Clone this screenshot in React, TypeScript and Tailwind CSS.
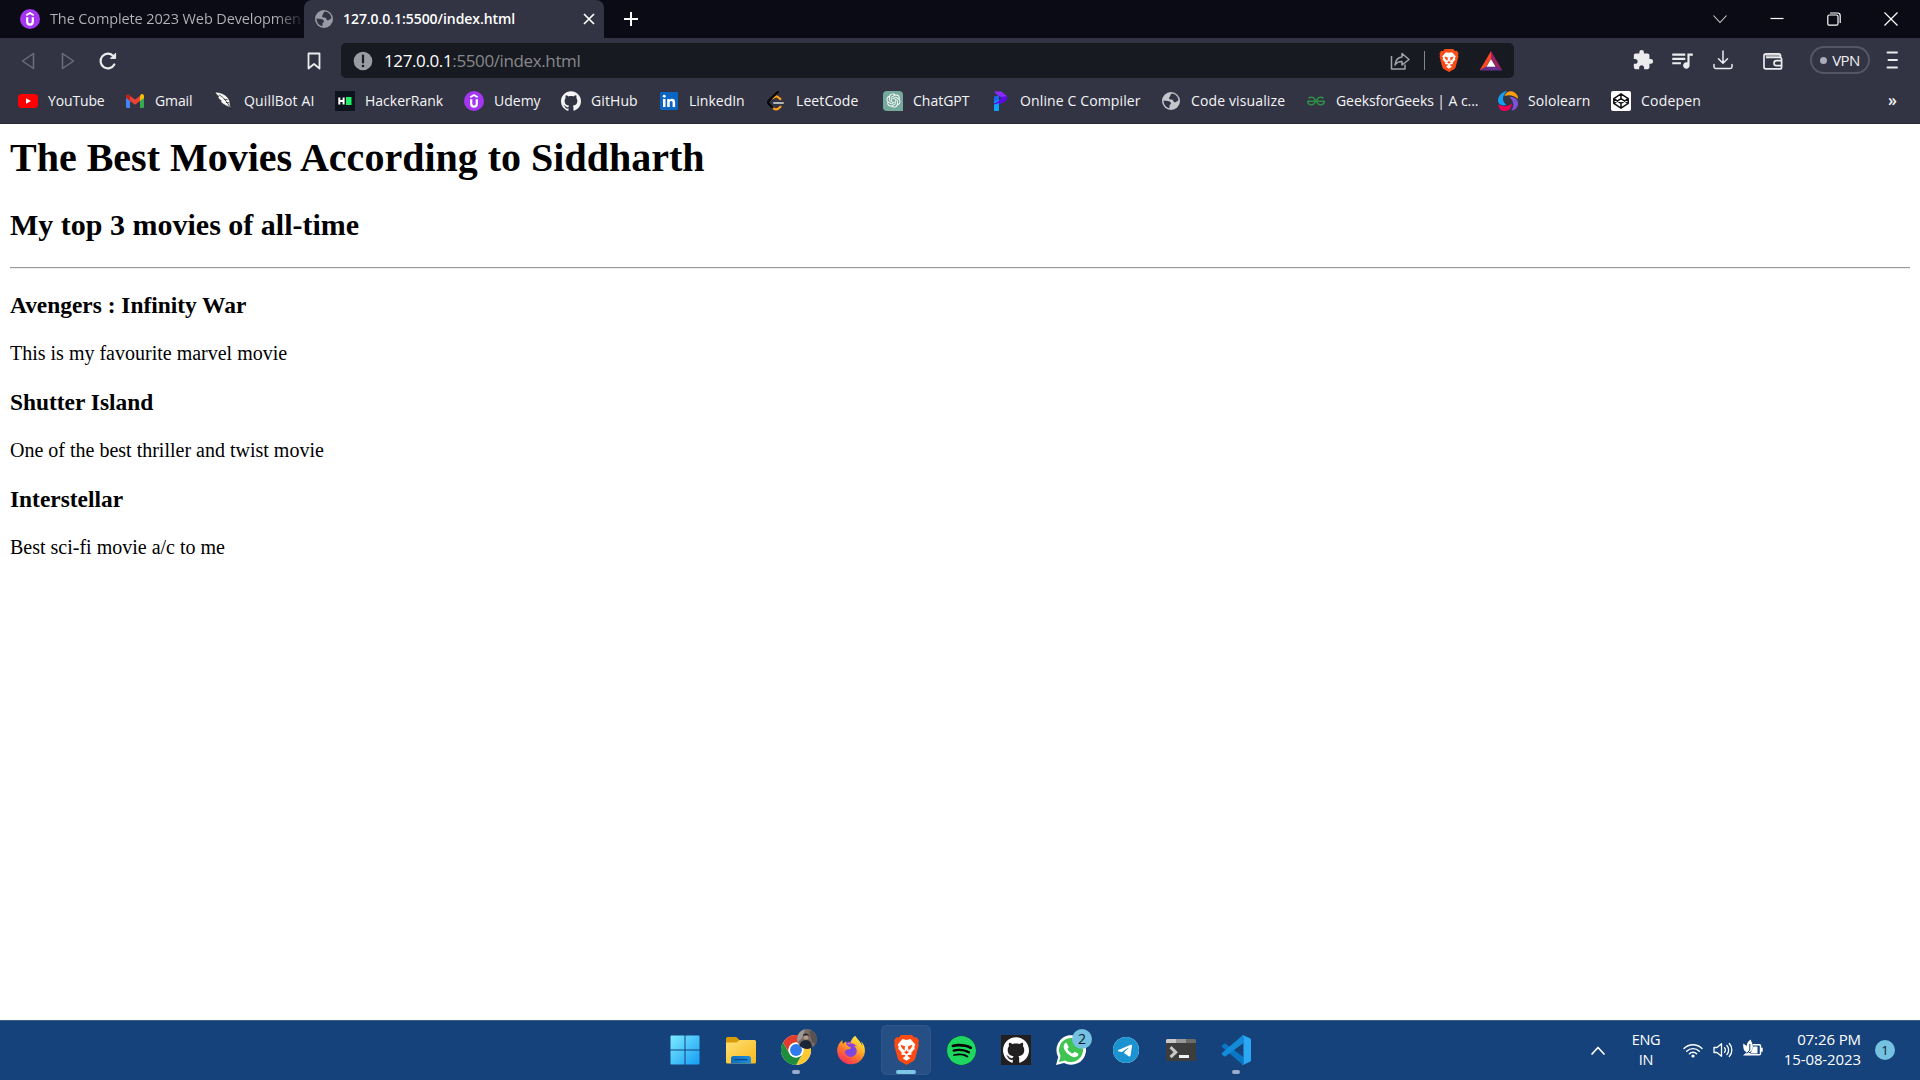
import React from 'react';
import { SiSpotify, SiGithub, SiTelegram, SiFirefoxbrowser, SiGeeksforgeeks } from 'react-icons/si';
import { RiOpenaiFill } from 'react-icons/ri';
import { MdExtension, MdQueueMusic } from 'react-icons/md';

const Udemy = () => (
  <svg viewBox="0 0 20 20" className="size-5 shrink-0">
    <circle cx="10" cy="10" r="10" fill="#a435f0" />
    <path d="M6.3 6.2 10 4l3.7 2.2" fill="none" stroke="#fff" strokeWidth="1.9" />
    <path d="M7.2 8.2v4.6a2.8 2.8 0 0 0 5.6 0V8.2" fill="none" stroke="#fff" strokeWidth="2.2" />
  </svg>
);

const Globe = ({ bg, fg }: { bg: string; fg: string }) => (
  <svg viewBox="0 0 20 20" className="size-5 shrink-0">
    <circle cx="10" cy="10" r="9" fill={fg} />
    <path d="M10.5 2.6C9 4 9.600 5 8.600 6 7.500 7 8 8.400 9.600 8.400c1.700 0 2.900.4 2.900 1.900 0 1 1.400 1.200 2.300.6L17.400 9.500C17.300 5.600 14.200 2.700 10.500 2.600Z" fill={bg} />
    <path d="M2.600 9.500 6.800 10c1.600.3 3.200 1 3.200 2.300s-1.400 1-1.500 2.400L8.400 17.200C4.900 16.500 2.500 13.500 2.600 9.500Z" fill={bg} />
  </svg>
);

const YouTube = () => (
  <svg viewBox="0 0 20 20" className="size-5 shrink-0">
    <rect y="3" width="20" height="14" rx="3.500" fill="#f00" />
    <path d="m8 7.200 5 2.800-5 2.800Z" fill="#fff" />
  </svg>
);

const Gmail = () => (
  <svg viewBox="0 0 20 20" className="size-5 shrink-0">
    <path d="M1 5.500 5 8.500V17H2.300A1.300 1.300 0 0 1 1 15.700Z" fill="#4285f4" />
    <path d="M19 5.500 15 8.500V17h2.700a1.300 1.300 0 0 0 1.300-1.300Z" fill="#34a853" />
    <path d="M15 5v5l4-3V5.200c0-1.900-2-2.700-3.200-1.700Z" fill="#fbbc04" />
    <path d="M5 10V4.900L10 8.600l5-3.700V10l-5 3.700Z" fill="#ea4335" />
    <path d="M1 5.200V7l4 3V4.900l-.9-1.400C2.900 2.600 1 3.400 1 5.200Z" fill="#c5221f" />
  </svg>
);

const Quill = () => (
  <svg viewBox="0 0 20 20" className="size-5 shrink-0">
    <path d="M1 1C7 1.200 13 4 15.200 9c.9 2 .7 4.500 1.200 6.500l.8 2.500-2.500-2.200C10 14 8.300 12.500 6.500 10.500L7.500 10C5 8.500 4.300 7 3.600 5.300l1.400.2C3 4 2 3 1 1Z" fill="#f6f6f4" stroke="#16161a" strokeWidth=".5" />
    <path d="M5 3.800c4.500 2.400 8 6.500 12 14.500M10 8.300l3.500.3M12 11.500l3 .3" fill="none" stroke="#1a1a1e" strokeWidth=".7" />
  </svg>
);

const HackerRank = () => (
  <svg viewBox="0 0 20 20" className="size-5 shrink-0">
    <rect width="20" height="20" fill="#0e141e" />
    <path d="M4.300 6.500v7M8.600 6.500v7M4 10h5" stroke="#fff" strokeWidth="2" />
    <rect x="11" y="6" width="5.500" height="8" fill="#1ff06a" />
  </svg>
);

const LinkedIn = () => (
  <svg viewBox="0 0 20 20" className="size-5 shrink-0">
    <rect x="1" y="1" width="18" height="18" rx="1.200" fill="#0a66c2" />
    <path d="M4 8h2.500v8H4ZM8.200 8h2.400v1.100c.5-.8 1.400-1.300 2.500-1.300 2.400 0 3 1.600 3 3.700V16h-2.500v-4c0-1.200-.2-2-1.300-2s-1.600.8-1.600 2v4H8.200Z" fill="#fff" />
    <circle cx="5.250" cy="5.300" r="1.450" fill="#fff" />
  </svg>
);

const LeetCode = () => (
  <svg viewBox="0 0 20 20" className="size-5 shrink-0">
    <path d="M6.800 7.200 8.300 6.200c1.500-1.300 3-.9 4.200.3l1.900 1.600M6.600 16.500c2.200 2.500 4.700 2.500 6.500.5l1.400-1.300" fill="none" stroke="#ffa116" strokeWidth="2.200" strokeLinecap="round" />
    <path d="m11.800 1-9 8.600a2.500 2.500 0 0 0 0 3.300L6.500 16.500" fill="none" stroke="#070706" strokeWidth="2.200" strokeLinecap="round" />
    <path d="M8 12H17" stroke="#b3b3b3" strokeWidth="2" strokeLinecap="round" />
  </svg>
);

const ChatGPT = () => (
  <span className="flex size-5 shrink-0 items-center justify-center rounded-[4px] rounded-br-none bg-[#75a99c] text-white">
    <RiOpenaiFill className="size-[17px]" />
  </span>
);

const Programiz = () => (
  <svg viewBox="0 0 20 20" className="size-5 shrink-0">
    <path d="M4 9.800 9 7.500V18.500a1.500 1.500 0 0 1-1.500 1.500H4Z" fill="#0ea2ff" />
    <path d="M4 .5h7.500L17 5.200v3.500L12 6.400C9.500 5 7 4.500 4 .5Z" fill="#8a2bff" />
    <path d="m11.500 5.800 5.500-.6v3.500c-3.500 3.600-8 4.800-13 7.300v-3.800c2-.2 6.500-2.500 7.500-6.400Z" fill="#5b0be6" />
    <path d="M4 5.500 9 4.500v4l-5 2.500Z" fill="#1668f2" />
    <path d="M4 13.500 9 12v6.500a1.500 1.500 0 0 1-1.500 1.500H4Z" fill="#0ea2ff" />
  </svg>
);

const Sololearn = () => (
  <svg viewBox="0 0 20 20" className="size-5 shrink-0">
    <path d="M9.500 0C3 .5-1 6.500.3 11.300c1 2.500 4.500 4 8 2.500C3.500 10.500 4 4 9.500 0Z" fill="#149ef2" />
    <path d="M6.300 5C8.500 0 13.500-1 17.200 1.900c2.300 1.900 3 3.700 2.600 6.100C16.500 4 10.500 3.500 6.300 5Z" fill="#ff9f0a" />
    <path d="M11.500 6c5-.8 9 2.900 8.500 7.200-.6 3.800-3.200 6-6.700 6.300 3-3.800 3-9-1.800-13.500Z" fill="#7f50d8" />
    <path d="M.3 13.300c3.500 2.600 8.500 3 13.500-.8 0 4.800-3.800 8-8.200 7.400C2.300 19.500.5 17 .3 13.300Z" fill="#f50057" />
  </svg>
);

const Codepen = () => (
  <svg viewBox="0 0 20 20" className="size-5 shrink-0">
    <rect width="20" height="20" rx="2" fill="#fff" />
    <path d="M10 2.800 17.200 7.600v4.800L10 17.200 2.800 12.400V7.600ZM10 2.800v4.800M10 12.400v4.800M2.800 7.600l7.200 4.800 7.200-4.800M2.800 12.400 10 7.600l7.200 4.800" fill="none" stroke="#111" strokeWidth="1.500" strokeLinejoin="round" />
  </svg>
);

const bookmarks: { label: string; icon: React.ReactNode; box: string }[] = [
  { label: 'YouTube', icon: <YouTube />, box: 'w-[107px] tracking-[-0.15px]' },
  { label: 'Gmail', icon: <Gmail />, box: 'w-[89px] tracking-[-0.1px]' },
  { label: 'QuillBot AI', icon: <Quill />, box: 'w-[121px] tracking-[0.15px]' },
  { label: 'HackerRank', icon: <HackerRank />, box: 'w-[129px]' },
  { label: 'Udemy', icon: <Udemy />, box: 'w-[97px]' },
  { label: 'GitHub', icon: <SiGithub className="size-5 shrink-0" />, box: 'w-[98px] tracking-[0.1px]' },
  { label: 'LinkedIn', icon: <LinkedIn />, box: 'w-[107px]' },
  { label: 'LeetCode', icon: <LeetCode />, box: 'w-[117px] tracking-[0.1px]' },
  { label: 'ChatGPT', icon: <ChatGPT />, box: 'w-[107px]' },
  { label: 'Online C Compiler', icon: <Programiz />, box: 'w-[171px] tracking-[0.13px]' },
  { label: 'Code visualize', icon: <Globe bg="#323443" fg="#c4c6cc" />, box: 'w-[145px] tracking-[0.13px]' },
  { label: 'GeeksforGeeks | A c...', icon: <SiGeeksforgeeks className="size-5 shrink-0 px-px text-[#2f8d46]" />, box: 'w-[192px] tracking-[-0.07px]' },
  { label: 'Sololearn', icon: <Sololearn />, box: 'w-[113px] tracking-[0.1px]' },
  { label: 'Codepen', icon: <Codepen />, box: 'w-[100px] tracking-[0.2px]' },
];

function TabStrip() {
  return (
    <div className="flex h-[38px] items-center bg-[#0a0b15]">
      <div className="flex w-[304px] items-center gap-2.5 pl-5">
        <Udemy />
        <div className="w-[250px] whitespace-nowrap bg-gradient-to-r from-[#b4b5bb] from-90% to-[#2a2b34] bg-clip-text text-[14.5px] tracking-[-0.12px] text-transparent">
          The Complete 2023 Web Developmen
        </div>
      </div>
      <div className="flex h-full w-[300px] items-center rounded-t-lg bg-[#323443] pl-2.5">
        <Globe bg="#323443" fg="#9a9ca5" />
        <span className="mb-px ml-[9px] w-[240px] whitespace-nowrap text-[14px] font-semibold tracking-[-0.06px] text-white">127.0.0.1:5500/index.html</span>
        <svg viewBox="0 0 12 12" className="size-3" fill="none" stroke="#fff" strokeWidth="1.700"><path d="m1 1 10 10M11 1 1 11" /></svg>
      </div>
      <svg viewBox="0 0 16 16" className="ml-[19px] size-4" fill="none" stroke="#fff" strokeWidth="2"><path d="M8 1v14M1 8h14" /></svg>
      <div className="ml-auto flex items-center gap-[43px] pr-[22px]">
        <svg viewBox="0 0 14 14" className="size-3.5" fill="none" stroke="#d0d1d6" strokeWidth="1.100"><path d="m.5 3.500 6.500 7 6.500-7" /></svg>
        <svg viewBox="0 0 14 14" className="size-3.5" fill="none" stroke="#fff" strokeWidth="1.200"><path d="M.5 6.500h13" /></svg>
        <svg viewBox="0 0 14 14" className="size-3.5" fill="none" stroke="#fff" strokeWidth="1.200"><rect x=".8" y="3" width="10.200" height="10.200" rx="1.500" /><path d="M3 1h7.500a2.700 2.700 0 0 1 2.700 2.700V11" /></svg>
        <svg viewBox="0 0 14 14" className="size-3.5" fill="none" stroke="#fff" strokeWidth="1.200"><path d="m.5.5 13 13M13.500.5l-13 13" /></svg>
      </div>
    </div>
  );
}

function Toolbar() {
  return (
    <div className="flex h-[45px] items-center text-[#ececee]">
      <svg viewBox="0 0 14 18" className="ml-[21px] h-[18px] w-3.5" fill="none" stroke="#6c6e7c" strokeWidth="1.500" strokeLinejoin="round"><path d="M12.500 1.500v15L1.500 9Z" /></svg>
      <svg viewBox="0 0 14 18" className="ml-[26px] h-[18px] w-3.5" fill="none" stroke="#6c6e7c" strokeWidth="1.500" strokeLinejoin="round"><path d="M1.500 1.500v15L12.500 9Z" /></svg>
      <svg viewBox="0 0 20 20" className="ml-[23px] size-5" fill="none" stroke="currentColor" strokeWidth="2.200" strokeLinecap="round"><path d="M16.300 13.500A7.300 7.300 0 1 1 15 4.800" /><path d="M12.800 7.400h4.800V2.600Z" fill="currentColor" strokeWidth="1" strokeLinejoin="round" /></svg>
      <svg viewBox="0 0 14 18" className="ml-[189px] h-[18px] w-3.5" fill="none" stroke="currentColor" strokeWidth="1.800" strokeLinejoin="round"><path d="M1.500 1.500h11v15L7 12l-5.500 4.500Z" /></svg>
      <div className="ml-5 flex h-[35px] w-[1173px] items-center rounded-[5px] bg-[#181a21]">
        <svg viewBox="0 0 20 20" className="ml-[12px] size-5"><circle cx="10" cy="10" r="9.300" fill="#9a9ca5" /><path d="M10 4.500v7" stroke="#181a21" strokeWidth="2.200" strokeLinecap="round" /><circle cx="10" cy="15" r="1.300" fill="#181a21" /></svg>
        <span className="ml-[11px] whitespace-nowrap text-[17px] tracking-[-0.38px] text-[#87888c]"><span className="text-white">127.0.0.1</span>:5500/index.html</span>
        <svg viewBox="0 0 20 20" className="ml-auto size-5" fill="none" stroke="#a3a4a9" strokeWidth="1.500" strokeLinejoin="round"><path d="M1.500 5v13H15v-4.500" /><path d="M12 2.500 19 8.500l-7 5.500v-3.500c-3.500 0-5.500 1-7 3.500.4-4.500 2.800-7.500 7-8Z" /></svg>
        <span className="ml-3.5 h-[19px] w-px bg-[#85868b]" />
        <BraveLion className="ml-3.5 h-[23px] w-5" />
        <svg viewBox="0 0 24 21" className="ml-5 mr-[11px] h-5 w-6"><path d="M12 0 0 20.500 7 16.500 12 8Z" fill="#ff4724" /><path d="M12 0 24 20.500 17 16.500 12 8Z" fill="#9e1f63" /><path d="M0 20.500h24l-7-4H7Z" fill="#662d91" /><path d="m12 8.500 4.800 8H7.200Z" fill="#fff" /></svg>
      </div>
      <MdExtension className="mb-px ml-[118px] size-[22px]" />
      <MdQueueMusic className="mb-px ml-[15px] size-[26px]" />
      <svg viewBox="0 0 20 20" className="mb-px ml-[18px] size-5" fill="none" stroke="currentColor" strokeWidth="1.500" strokeLinecap="round" strokeLinejoin="round"><path d="M10 1v12M5.500 8.800 10 13.200l4.500-4.400M1 14.500v2.300c0 1 .8 1.700 1.700 1.700h14.600c.9 0 1.700-.7 1.700-1.700v-2.300" /></svg>
      <svg viewBox="0 0 20 20" className="ml-[30px] size-5" fill="none" stroke="currentColor" strokeWidth="1.700" strokeLinejoin="round"><path d="M2 3h13.500c1.200 0 2 .8 2 1.800v1.700H3Z" fill="#a4a5ad" stroke="none" /><path d="M17.500 6.500V4.600c0-1-.7-1.700-1.700-1.700H3C1.800 2.900 1 3.700 1 4.700v11.400c0 1.100.8 1.800 1.800 1.800h14c1 0 1.800-.7 1.800-1.700V8c0-.9-.7-1.500-1.700-1.500H3" /><path d="M18.500 9.700h-5a2.400 2.400 0 0 0 0 4.900h5" /></svg>
      <div className="mb-px ml-[27px] flex h-7 w-[60px] items-center justify-center gap-[5px] rounded-full border-2 border-[#545666] text-[15px] tracking-[-0.6px] text-[#f0f0f2]">
        <span className="size-[7px] rounded-full bg-[#a9abbb]" />VPN
      </div>
      <svg viewBox="0 0 12 18" className="mb-px ml-4 h-[18px] w-3" fill="none" stroke="currentColor" strokeWidth="1.900" strokeLinecap="round"><path d="M1.500 1.500h9.500M2.500 9H11M1.500 16.500h9.500" /></svg>
    </div>
  );
}

function BraveLion({ className }: { className: string }) {
  return (
    <svg viewBox="0 0 25 30" className={className}>
      <path d="M7 0h11l2.300 2.600 2.300-.4L25 5.500l-.8 2.400.6 2-3.500 13.300c-.4 1.500-1.200 2.300-2.400 3.100L12.500 30l-6.400-3.700c-1.200-.8-2-1.600-2.400-3.100L.2 9.900l.6-2L0 5.500l2.400-3.300 2.300.4Z" fill="#fb4b14" />
      <path d="m12.500 4.900 4-.8L21.300 9.500l-1 2.300.5 2-3.500 3.700.3 2.200-3.600.4-.4.900 2.700 2.200-3.800 2.500-3.800-2.500L11.400 21l-.4-.9-3.600-.4.300-2.200-3.500-3.700.5-2-1-2.300 4.800-5.400Z" fill="#fff" />
      <path d="m6.500 9.700 4.500 1.500-.5 4.300-2.700-2.400ZM18.500 9.700 14 11.200l.5 4.300 2.700-2.400ZM9.700 16.800h1.500L12.500 15l1.300 1.800h1.500l-2.800 2.500Z" fill="#fb4b14" />
    </svg>
  );
}

function Bookmarks() {
  return (
    <div className="flex h-[41px] items-center border-b border-[#282a35] pb-[5px] pl-[18px] text-[14px] text-[#f5f5f7]">
      {bookmarks.map((b) => (
        <div key={b.label} className={`flex shrink-0 items-center gap-2.5 whitespace-nowrap ${b.box}`}>
          {b.icon}
          <span>{b.label}</span>
        </div>
      ))}
      <span className="mb-0.5 ml-auto pr-[23px] text-[16px] font-semibold leading-none">»</span>
    </div>
  );
}

const movies = [
  ['Avengers : Infinity War', 'This is my favourite marvel movie'],
  ['Shutter Island', 'One of the best thriller and twist movie'],
  ['Interstellar', 'Best sci-fi movie a/c to me'],
];

function Page() {
  return (
    <main className="flex-1 px-2.5 pt-[11px] font-['Liberation_Serif',serif] text-black">
      <h1 className="text-[40px] font-bold leading-[46px]">The Best Movies According to Siddharth</h1>
      <h2 className="mt-[27px] text-[30px] font-bold leading-[34px]">My top 3 movies of all-time</h2>
      <hr className="mt-[25px] h-0.5 border-0 border-b border-t border-b-[#eeeeee] border-t-[#9a9a9a]" />
      {movies.map(([title, text]) => (
        <section key={title} className="h-[97px] pt-[23px]">
          <h3 className="text-[23.400px] font-bold leading-[27px]">{title}</h3>
          <p className="mt-[23px] text-[20px] leading-[23px]">{text}</p>
        </section>
      ))}
    </main>
  );
}

const Windows = () => (
  <svg viewBox="0 0 30 30" className="size-[30px]">
    <defs><linearGradient id="win" x1="0" y1="0" x2="1" y2="1"><stop stopColor="#7cecff" /><stop offset="1" stopColor="#149cf5" /></linearGradient></defs>
    <path d="M.5 1.500a1 1 0 0 1 1-1H14.500v14H.5ZM15.500.5h13a1 1 0 0 1 1 1v13h-14ZM.5 15.500h14v14h-13a1 1 0 0 1-1-1ZM15.500 15.500h14v13a1 1 0 0 1-1 1h-13Z" fill="url(#win)" />
  </svg>
);

const Folder = () => (
  <svg viewBox="0 0 30 30" className="size-[30px]">
    <defs>
      <linearGradient id="fold" x1="0" y1="0" x2="1" y2="1"><stop stopColor="#ffdf76" /><stop offset="1" stopColor="#f8b91a" /></linearGradient>
      <linearGradient id="dock" x1="0" y1="0" x2="1" y2="0"><stop stopColor="#0f6cbd" /><stop offset="1" stopColor="#1e8fdc" /></linearGradient>
    </defs>
    <path d="M0 3.500A1.500 1.500 0 0 1 1.500 2h8.200a2 2 0 0 1 1.300.5L13.500 5v7H0Z" fill="#d99b07" />
    <path d="M0 7.500h10.500L13.500 5H28.500A1.500 1.500 0 0 1 30 6.500V27a1.500 1.500 0 0 1-1.500 1.500h-27A1.500 1.500 0 0 1 0 27Z" fill="url(#fold)" />
    <path d="M5 28.500v-5A2.500 2.500 0 0 1 7.500 21h15a2.500 2.500 0 0 1 2.500 2.500v5Z" fill="url(#dock)" />
    <path d="M9 24.700h12" stroke="#0a4887" strokeWidth="1.200" strokeLinecap="round" />
  </svg>
);

const Chrome = () => (
  <span className="relative size-[30px]">
    <svg viewBox="0 0 48 48" className="size-[30px]">
      <circle cx="24" cy="24" r="24" fill="#fff" />
      <path d="M24 12h20.800A24 24 0 0 0 3.200 12l10.400 18A12 12 0 0 1 24 12Z" fill="#e33b2e" />
      <path d="M34.400 30 24 48A24 24 0 0 0 44.800 12H24a12 12 0 0 1 10.400 18Z" fill="#fcc934" />
      <path d="M13.600 30 3.200 12A24 24 0 0 0 24 48l10.400-18a12 12 0 0 1-20.800 0Z" fill="#1e8e3e" />
      <circle cx="24" cy="24" r="12" fill="#fff" />
      <circle cx="24" cy="24" r="9.500" fill="#2f7bea" />
    </svg>
    <svg viewBox="0 0 20 20" className="absolute -top-1.5 left-4 size-5">
      <defs><clipPath id="face"><circle cx="10" cy="10" r="10" /></clipPath></defs>
      <g clipPath="url(#face)">
        <rect width="20" height="20" fill="#776c66" />
        <path d="M0 0h8l-3 9-5 5Z" fill="#a19a93" />
        <path d="M12 2h8v14l-5-3Z" fill="#5a5250" />
        <circle cx="9" cy="8" r="2.600" fill="#b39a88" />
        <path d="M6 7.500C5.500 3.500 12.500 3.500 12 8L11 6.500H7.500Z" fill="#26222a" />
        <path d="M2 20c0-6 3-9 7-9s6 3 6 9Z" fill="#1d2635" />
      </g>
    </svg>
  </span>
);

const Firefox = () => (
  <svg viewBox="0 0 24 24" className="size-[30px]">
    <defs>
      <linearGradient id="flame" x1=".8" y1="0" x2=".2" y2="1"><stop stopColor="#fff04a" /><stop offset=".35" stopColor="#ffb52a" /><stop offset=".65" stopColor="#ff6a2f" /><stop offset="1" stopColor="#f0246a" /></linearGradient>
      <radialGradient id="orb"><stop stopColor="#6a4ae6" /><stop offset="1" stopColor="#a33fd0" /></radialGradient>
    </defs>
    <circle cx="12" cy="12.500" r="7.500" fill="url(#orb)" />
    <SiFirefoxbrowser x="0.500" y="0.500" width="23" height="23" size="23" fill="url(#flame)" />
  </svg>
);

const WhatsApp = () => (
  <span className="relative size-[30px]">
    <svg viewBox="0 0 30 30" className="size-[30px]">
      <path d="M0 30 2.200 22A14.800 14.800 0 1 1 8 27.900Z" fill="#fff" />
      <path d="m3 27 1.600-6A12 12 0 1 1 9 25.400Z" fill="#3fc351" />
      <path d="M10.700 8.200c-.5-.6-1.100-.5-1.700.1-3 3-.6 7.500 3 10.700 3.800 3.300 7.700 4.300 9.900 1.600.6-.8.7-1.800.2-2.200l-2.900-1.500c-.5-.2-.8-.1-1.100.3l-1.200 1.400c-2.400-.7-4.600-2.800-5.500-4.700l1.100-1.500c.2-.4.200-.6 0-1Z" fill="#fff" />
    </svg>
    <span className="absolute -top-1.5 left-4 flex size-5 items-center justify-center rounded-full bg-[#74c1e2] text-[14px] leading-none text-[#10202c]">2</span>
  </span>
);

const Terminal = () => (
  <svg viewBox="0 0 30 30" className="size-[30px]">
    <rect y="4" width="30" height="22" rx="1.500" fill="#3d3d3d" />
    <path d="M0 5.500A1.500 1.500 0 0 1 1.500 4H10v4H0Z" fill="#c9c9c9" />
    <path d="M10 4h10v4H10Z" fill="#979797" />
    <path d="M20 4h8.500A1.500 1.500 0 0 1 30 5.500V8H20Z" fill="#6b6b6b" />
    <path d="m4.500 12.200 5.200 5-5.200 5" fill="none" stroke="#c8c8c8" strokeWidth="3" />
    <path d="M13 21.500h10" stroke="#f0f0f0" strokeWidth="3" />
  </svg>
);

const VSCode = () => (
  <svg viewBox="0 0 30 30" className="size-[30px]">
    <path d="M1 10.500 3 8.700c.5-.4 1.100-.4 1.600 0L22.500 22v7.600c-.7 0-1.200-.2-1.700-.7L1 12c-.5-.5-.5-1 0-1.500Z" fill="#0a76c4" />
    <path d="M1 19.500l2 1.800c.5.4 1.100.4 1.600 0L22.500 8V.4c-.7 0-1.200.2-1.700.7L1 18c-.5.500-.5 1 0 1.500Z" fill="#128bd8" />
    <path d="M22.300 29.800c-.9.300-1.500 0-1.900-.5.800.6 2.100.1 2.100-1V1.700c0-1.100-1.300-1.600-2.100-1 .4-.6 1-.8 1.900-.5L29 3.200c.6.300 1 .9 1 1.600v20.400c0 .7-.4 1.300-1 1.600Z" fill="#2ba8f4" />
  </svg>
);

const apps: { name: string; icon: React.ReactNode; mark?: string; active?: boolean }[] = [
  { name: 'start', icon: <Windows /> },
  { name: 'files', icon: <Folder /> },
  { name: 'chrome', icon: <Chrome />, mark: 'w-2 bg-[#9aabcb]' },
  { name: 'firefox', icon: <Firefox /> },
  { name: 'brave', icon: <BraveLion className="h-[30px] w-[25px]" />, mark: 'w-5 bg-[#7cc6e6]', active: true },
  { name: 'spotify', icon: <span className="flex size-[29px] rounded-full bg-black"><SiSpotify className="size-[29px] text-[#1ed760]" /></span> },
  { name: 'github', icon: <span className="flex size-[30px] items-center justify-center bg-[#211f20]"><SiGithub className="size-[26px] text-white" /></span> },
  { name: 'whatsapp', icon: <WhatsApp /> },
  { name: 'telegram', icon: <span className="flex size-[26px] rounded-full bg-white"><SiTelegram className="size-[26px] text-[#1c93d1]" /></span> },
  { name: 'terminal', icon: <Terminal /> },
  { name: 'code', icon: <VSCode />, mark: 'w-2 bg-[#9aabcb]' },
];

function Taskbar() {
  return (
    <footer className="flex h-[60px] items-center border-t border-[#3c5f88] bg-[#15427b] pb-px text-white">
      <div className="ml-[660px] flex gap-[5px]">
        {apps.map((a, i) => (
          <div key={a.name} className={`flex h-[50px] w-[50px] flex-col items-center rounded-md pt-2.5 ${i === 1 ? 'ml-px' : ''} ${a.active ? 'bg-[#264f85] ring-1 ring-inset ring-[#2f578b]' : ''}`}>
            <div className="flex h-[30px] items-center">{a.icon}</div>
            {a.mark && <span className={`mt-[5px] h-1 rounded-full ${a.mark}`} />}
          </div>
        ))}
      </div>
      <div className="ml-auto flex items-center pr-[25px]">
        <svg viewBox="0 0 14 9" className="h-[9px] w-3.5" fill="none" stroke="#fff" strokeWidth="1.700" strokeLinecap="round" strokeLinejoin="round"><path d="m1 8 6-6.500L13 8" /></svg>
        <div className="ml-[25px] w-8 text-center text-[14.500px] leading-5 tracking-[-0.3px]">ENG<br />IN</div>
        <svg viewBox="0 0 20 16" className="ml-[21px] h-4 w-5" fill="none" stroke="#fff" strokeWidth="1.400" strokeLinecap="round"><path d="M1 6.500a12.700 12.700 0 0 1 18 0M3.700 9.200a8.900 8.900 0 0 1 12.600 0M6.400 11.700a5.100 5.100 0 0 1 7.200 0" /><circle cx="10" cy="14" r="1.600" fill="#fff" stroke="none" /></svg>
        <svg viewBox="0 0 20 16" className="ml-2.5 h-4 w-5" fill="none" stroke="#fff" strokeWidth="1.300" strokeLinecap="round" strokeLinejoin="round"><path d="M1 5.500h3L8.500 1.700v12.600L4 10.500H1ZM11.500 5.700c1.200 1.200 1.200 3.400 0 4.600M13.900 3.500c2.300 2.300 2.300 6.700 0 9M16.300 1.500c3.400 3.600 3.400 9.400 0 13" /></svg>
        <svg viewBox="0 0 20 18" className="mb-1 ml-2.5 h-[18px] w-5"><path d="M10 5.700h6.200a1.300 1.300 0 0 1 1.300 1.300v7.500a1.300 1.300 0 0 1-1.300 1.300H5" fill="none" stroke="#fff" strokeWidth="1.500" /><path d="M18 8.700h1.700v4H18ZM10.500 7.500h4v7H7.500Z" fill="#fff" /><path d="M.3 4.500 3.700 7C3.700 4 5.500 2 7.700.5c.5 2.500 2.500 4.500 2.200 7.500-.3 3.300-2.200 5.300-5 5.300C1.500 13.300-.2 10 .3 4.500ZM0 16.500l4-3.500 4 1.500-3 2Z" fill="#fff" /><path d="M6.800 5v6l-3 3.500" fill="none" stroke="#15427b" strokeWidth="1" /></svg>
        <div className="mb-0.5 ml-5 w-[78px] whitespace-nowrap text-right text-[15px] leading-5 tracking-[-0.1px]">07:26 PM<br />15-08-2023</div>
        <span className="ml-3.5 flex size-5 items-center justify-center rounded-full bg-[#74c1e2] text-[13px] leading-none text-[#10202c]">1</span>
      </div>
    </footer>
  );
}

export default function App() {
  return (
    <div className="flex h-[1080px] w-[1920px] flex-col overflow-hidden bg-white font-['Open_Sans','Noto_Sans',sans-serif]">
      <header className="bg-[#323443]">
        <TabStrip />
        <Toolbar />
        <Bookmarks />
      </header>
      <Page />
      <Taskbar />
    </div>
  );
}
